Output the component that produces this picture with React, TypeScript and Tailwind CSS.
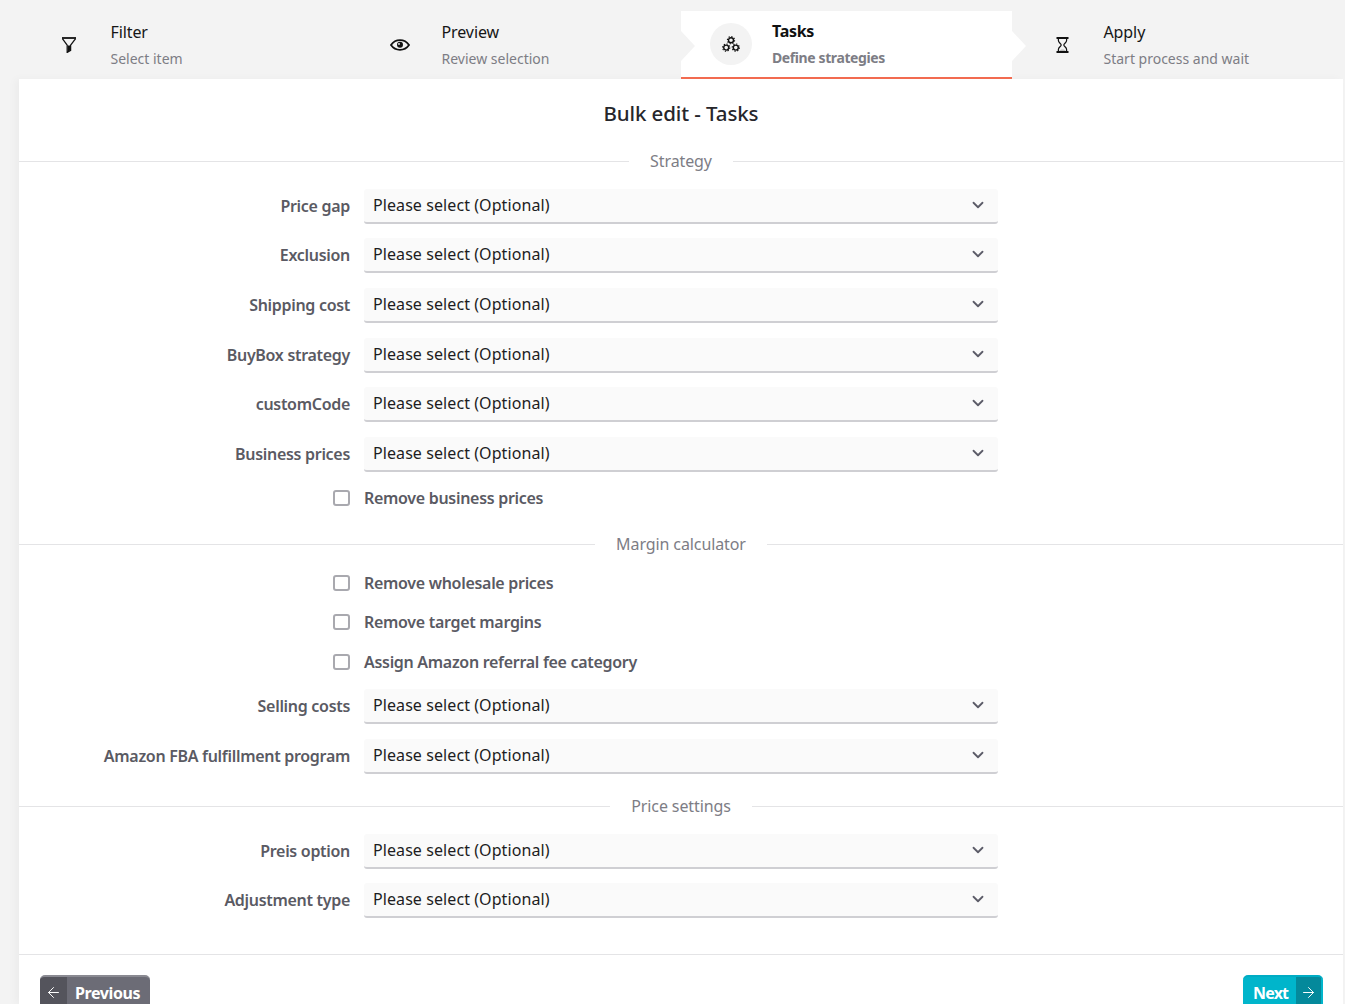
import React from "react";
import { ChevronDown, ArrowLeft, ArrowRight } from "lucide-react";

const FONT = "[font-family:'Noto_Sans',sans-serif]";

function FilterIcon() {
  return (
    <svg width="16" height="16" viewBox="0 0 16 16" fill="none" stroke="#111" strokeWidth="1.3">
      <path d="M1 1h14" strokeWidth="1.8" />
      <path d="M1.4 1.6L6.2 8.2V15.4L9.6 13.4V8.2L14.6 1.6" />
      <path d="M6.8 8.4H9V13.4L6.8 14.6Z" fill="#111" stroke="none" />
    </svg>
  );
}
function EyeIcon() {
  return (
    <svg width="20" height="12" viewBox="0 0 20 12" fill="none" stroke="#111" strokeWidth="1.8">
      <path d="M1 6C3.2 2.8 6.4 1.2 10 1.2S16.8 2.8 19 6C16.8 9.2 13.6 10.8 10 10.8S3.2 9.2 1 6Z" />
      <circle cx="10" cy="5.8" r="3" fill="#111" stroke="none" />
      <circle cx="9" cy="4.9" r="0.9" fill="#fff" stroke="none" />
    </svg>
  );
}
function GearsIcon() {
  const gear = (cx: number, cy: number) => (
    <g key={`${cx}-${cy}`}>
      <circle cx={cx} cy={cy} r="2.5" fill="none" stroke="#111" strokeWidth="1.4" />
      <circle cx={cx} cy={cy} r="3.6" fill="none" stroke="#111" strokeWidth="1.1" strokeDasharray="1.3 1.5" />
    </g>
  );
  return (
    <svg width="18" height="16" viewBox="0 0 18 16">
      {gear(9, 4.2)}
      {gear(4.2, 11.6)}
      {gear(13.8, 11.6)}
    </svg>
  );
}
function HourglassIcon() {
  return (
    <svg width="13" height="16" viewBox="0 0 13 16" fill="none" stroke="#111">
      <path d="M0.5 1H12.5M0.5 15H12.5" strokeWidth="1.8" />
      <path d="M2.4 1V3.6C2.4 5.6 5.2 6.6 5.2 8C5.2 9.4 2.4 10.4 2.4 12.4V15M10.6 1V3.6C10.6 5.6 7.8 6.6 7.8 8C7.8 9.4 10.6 10.4 10.6 12.4V15" strokeWidth="1.2" />
      <path d="M3 14.4C4 11.8 9 11.8 10 14.4Z" fill="#111" fillOpacity="0.25" stroke="none" />
    </svg>
  );
}

function Step({ icon, title, sub }: { icon: React.ReactNode; title: string; sub: string }) {
  return (
    <div className="flex h-[79px] w-[331px] items-center pl-[29px] shrink-0">
      <div className="flex w-[42px] justify-center pt-[10px]">{icon}</div>
      <div className="ml-[20.5px] flex flex-col pt-[10px]">
        <span className="text-[16px] leading-[24px] text-[#161616] tracking-[-0.1px]">{title}</span>
        <span className="mt-[4px] text-[14px] leading-[22px] text-[#7d7d85] tracking-[0px]">{sub}</span>
      </div>
    </div>
  );
}

function ActiveStep() {
  return (
    <div className="relative mt-[11px] flex h-[68px] w-[331px] shrink-0 items-center border-b-2 border-[#f26b50] bg-white pl-[29px]">
      <span className="absolute left-0 top-[20px] h-0 w-0 border-y-[15px] border-l-[14px] border-y-transparent border-l-[#f3f3f3]" />
      <span className="absolute left-full top-[20px] z-10 h-0 w-0 border-y-[15px] border-l-[14px] border-y-transparent border-l-white" />
      <div className="flex h-[42px] w-[42px] items-center justify-center rounded-full bg-[#f3f3f3]">
        <GearsIcon />
      </div>
      <div className="ml-[20px] flex flex-col">
        <span className="text-[16px] font-bold leading-[24px] text-[#111] tracking-[-0.3px]">Tasks</span>
        <span className="mt-[4px] text-[14px] font-bold leading-[22px] text-[#7d7d85] tracking-[-0.4px]">Define strategies</span>
      </div>
    </div>
  );
}

function Divider({ label, top, bottom }: { label: string; top: string; bottom: string }) {
  return (
    <div className={`flex items-center ${top} ${bottom}`}>
      <div className="h-px flex-1 bg-[#e4e4e6]" />
      <span className="px-[21px] text-[16px] leading-[20px] text-[#7d7d85] tracking-[-0.1px]">{label}</span>
      <div className="h-px flex-1 bg-[#e4e4e6]" />
    </div>
  );
}

function SelectRow({ label, mb }: { label: string; mb: string }) {
  return (
    <div className={`flex h-[34px] items-center ${mb}`}>
      <label className="w-[331px] text-right text-[16px] font-semibold leading-[20px] text-[#5a5a63] tracking-[-0.3px]">{label}</label>
      <div className="ml-[14px] flex h-[35px] w-[634px] items-center justify-between rounded-[3px] border-b-2 border-[#cfcfd3] bg-[#fafafa] pl-[9px] pr-[11.5px]">
        <span className="text-[16px] leading-[20px] text-[#1d1d22] tracking-[0.08px]">Please select (Optional)</span>
        <ChevronDown size={18} strokeWidth={2.4} color="#5c5c68" />
      </div>
    </div>
  );
}

function CheckRow({ label, mb }: { label: string; mb: string }) {
  return (
    <div className={`flex h-[20px] items-center ${mb}`}>
      <div className="ml-[314px] h-[16px] w-[17px] rounded-[3px] border-2 border-[#a9a9af] bg-white" />
      <span className="ml-[14px] text-[16px] font-semibold leading-[20px] text-[#5a5a63] tracking-[-0.3px]">{label}</span>
    </div>
  );
}

export default function App() {
  return (
    <div className={`h-screen w-full overflow-hidden bg-[#f3f3f3] ${FONT}`}>
      <div className="flex h-[79px] items-start pl-[19px]">
        <Step icon={<FilterIcon />} title="Filter" sub="Select item" />
        <Step icon={<EyeIcon />} title="Preview" sub="Review selection" />
        <ActiveStep />
        <Step icon={<HourglassIcon />} title="Apply" sub="Start process and wait" />
      </div>

      <main className="ml-[19px] mr-[2px] h-[925px] bg-white shadow-[-4px_0_8px_rgba(0,0,0,0.03)]">
        <h1 className="pt-[19px] text-center text-[20.5px] font-medium leading-[30px] text-[#26262b] tracking-[-0.1px]">Bulk edit - Tasks</h1>

        <Divider label="Strategy" top="mt-[23px]" bottom="mb-[18px]" />
        <SelectRow label="Price gap" mb="mb-[15px]" />
        <SelectRow label="Exclusion" mb="mb-[16px]" />
        <SelectRow label="Shipping cost" mb="mb-[16px]" />
        <SelectRow label="BuyBox strategy" mb="mb-[15px]" />
        <SelectRow label="customCode" mb="mb-[16px]" />
        <SelectRow label="Business prices" mb="mb-[17px]" />
        <CheckRow label="Remove business prices" mb="mb-[26px]" />

        <Divider label="Margin calculator" top="mt-0" bottom="mb-[19px]" />
        <CheckRow label="Remove wholesale prices" mb="mb-[19px]" />
        <CheckRow label="Remove target margins" mb="mb-[20px]" />
        <CheckRow label="Assign Amazon referral fee category" mb="mb-[17px]" />
        <SelectRow label="Selling costs" mb="mb-[16px]" />
        <SelectRow label="Amazon FBA fulfillment program" mb="mb-[23px]" />

        <Divider label="Price settings" top="mt-0" bottom="mb-[18px]" />
        <SelectRow label="Preis option" mb="mb-[15px]" />
        <SelectRow label="Adjustment type" mb="mb-[37px]" />

        <div className="h-px bg-[#e4e4e6]" />
        <div className="flex justify-between pl-[21px] pr-[20px] pt-[20px]">
          <button className="flex h-[36px] w-[110px] overflow-hidden rounded-[5px] border-t-2 border-[#8a8a92] bg-[#6c6c76] text-white">
            <span className="flex h-full w-[27px] items-start justify-center bg-[#54545c] pt-[7px]">
              <ArrowLeft size={17} strokeWidth={1.4} />
            </span>
            <span className="pl-[8px] text-[16px] font-bold leading-[32px] tracking-[-0.4px]">Previous</span>
          </button>
          <button className="flex h-[36px] w-[80px] overflow-hidden rounded-[5px] border-t-2 border-[#00acc4] bg-[#00b5cb] text-white">
            <span className="w-[53px] pl-[10px] text-left text-[16px] font-bold leading-[32px] tracking-[-0.8px]">Next</span>
            <span className="flex h-full w-[25px] items-start justify-center bg-[#04899b] pt-[7px]">
              <ArrowRight size={17} strokeWidth={1.4} />
            </span>
          </button>
        </div>
      </main>
    </div>
  );
}
